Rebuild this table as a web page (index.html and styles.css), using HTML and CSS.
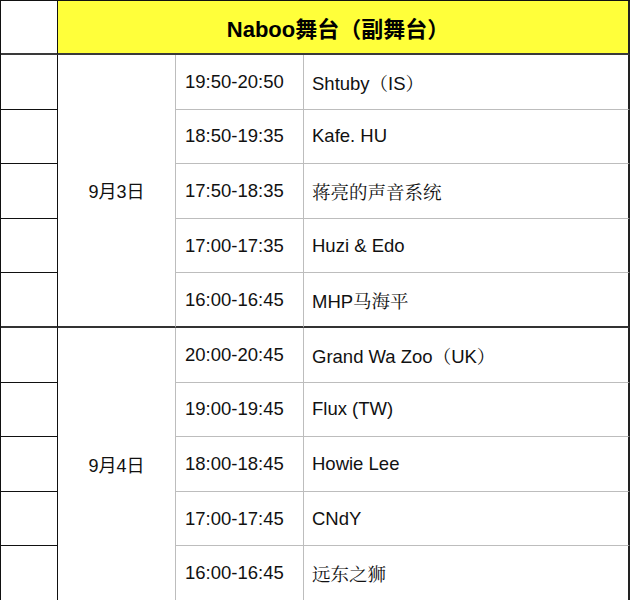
FILE: index.html
```html
<!DOCTYPE html>
<html lang="zh">
<head>
<meta charset="utf-8">
<title>Naboo舞台</title>
<link rel="stylesheet" href="styles.css">
</head>
<body>
<table class="sched">
  <colgroup>
    <col class="c-idx">
    <col class="c-date">
    <col class="c-time">
    <col class="c-name">
  </colgroup>
  <tr class="head">
    <td class="idx"></td>
    <td class="title" colspan="3">Naboo舞台（副舞台）</td>
  </tr>
  <tr>
    <td class="idx"></td>
    <td class="date group-end" rowspan="5">9月3日</td>
    <td class="time">19:50-20:50</td>
    <td class="name">Shtuby（IS）</td>
  </tr>
  <tr>
    <td class="idx"></td>
    <td class="time">18:50-19:35</td>
    <td class="name">Kafe. HU</td>
  </tr>
  <tr>
    <td class="idx"></td>
    <td class="time">17:50-18:35</td>
    <td class="name">蒋亮的声音系统</td>
  </tr>
  <tr>
    <td class="idx"></td>
    <td class="time">17:00-17:35</td>
    <td class="name">Huzi &amp; Edo</td>
  </tr>
  <tr class="last">
    <td class="idx group-end"></td>
    <td class="time group-end">16:00-16:45</td>
    <td class="name group-end">MHP马海平</td>
  </tr>
  <tr>
    <td class="idx"></td>
    <td class="date" rowspan="5">9月4日</td>
    <td class="time">20:00-20:45</td>
    <td class="name">Grand Wa Zoo（UK）</td>
  </tr>
  <tr>
    <td class="idx"></td>
    <td class="time">19:00-19:45</td>
    <td class="name">Flux (TW)</td>
  </tr>
  <tr>
    <td class="idx"></td>
    <td class="time">18:00-18:45</td>
    <td class="name">Howie Lee</td>
  </tr>
  <tr>
    <td class="idx"></td>
    <td class="time">17:00-17:45</td>
    <td class="name">CNdY</td>
  </tr>
  <tr>
    <td class="idx"></td>
    <td class="time">16:00-16:45</td>
    <td class="name">远东之狮</td>
  </tr>
</table>
</body>
</html>
```

FILE: styles.css
```css
html, body {
  margin: 0;
  padding: 0;
  background: #fff;
}

.sched {
  border-collapse: separate;
  border-spacing: 0;
  table-layout: fixed;
  width: 630px;
  border-top: 1px solid #111;
  border-left: 1px solid #111;
  font-family: "Liberation Sans", Arial, "Noto Sans CJK SC", sans-serif;
  font-size: 18.5px;
  color: #111;
}

.c-idx { width: 57px; }
.c-date { width: 118px; }
.c-time { width: 128px; }
.c-name { width: 326px; }

.sched td {
  padding: 0;
  height: 54.6px;
  box-sizing: border-box;
  border-right: 1px solid #bdbdbd;
  border-bottom: 1px solid #bdbdbd;
  vertical-align: middle;
  white-space: nowrap;
}

.sched .head td {
  height: 54px;
  border-bottom: 2px solid #3a3a3a;
}

.sched td.idx {
  border-right: 1px solid #111;
  border-bottom: 1px solid #111;
}

.sched .head td.idx {
  border-bottom: 2px solid #3a3a3a;
}

.sched td.title {
  background: #ffff3a;
  text-align: center;
  font-weight: bold;
  font-size: 22px;
  color: #000;
  border-right: 2px solid #222;
  padding-right: 10px;
  font-family: "Liberation Sans", Arial, "Noto Sans CJK SC", sans-serif;
}

.sched td.date {
  text-align: center;
  font-size: 18px;
  font-family: "Liberation Sans", Arial, "Noto Sans CJK SC", sans-serif;
}

.sched td.time {
  padding-left: 9px;
}

.sched td.name {
  padding-left: 8px;
  border-right: 2px solid #222;
  font-family: "Liberation Sans", Arial, "Noto Serif CJK SC", "Noto Sans CJK SC", sans-serif;
}

.sched td.group-end {
  border-bottom: 2px solid #333;
}
```
